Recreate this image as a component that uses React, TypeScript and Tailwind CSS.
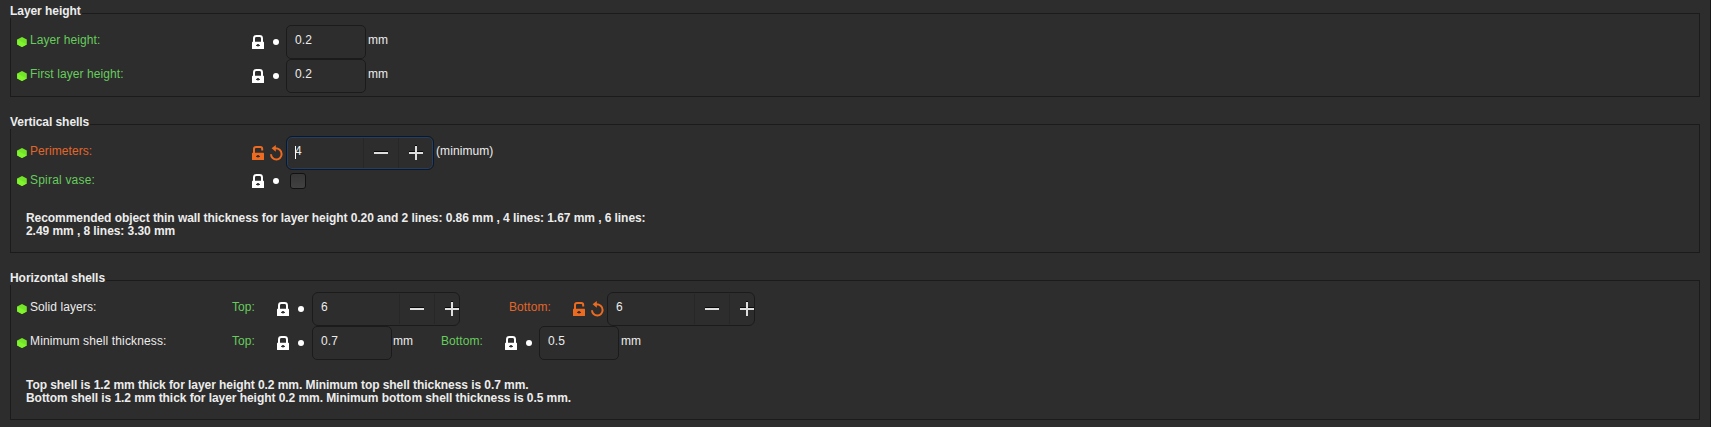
import type { ReactNode } from "react";

function Hexagon() {
  return (
    <svg width="10" height="10" viewBox="0 0 10 10" className="mr-[3px] shrink-0">
      <path d="M5 0 9.8 2.5v5L5 10 .2 7.5v-5Z" fill="#72e528" />
      <path d="M.2 2.5 9.8 7.5 5 10 .2 7.5Z" fill="#80f52d" />
    </svg>
  );
}

function Lock({ open = false }: { open?: boolean }) {
  return (
    <svg width="12" height="14" viewBox="0 0 12 14" className={open ? "shrink-0 text-[#ed6b21]" : "shrink-0 text-white"}>
      <path
        d={open ? "M2 7V3Q2 1 4 1h4.4Q10.2 1 10.2 3V4.6" : "M2 7V3.4Q2 1 4.4 1h3.2Q10 1 10 3.4V7"}
        fill="none"
        stroke="currentColor"
        strokeWidth="2"
      />
      <rect y="6.8" width="12" height="7.2" rx="0.5" fill="currentColor" />
      <path d="M4 10.4h4" stroke="#2d2d2d" strokeWidth="1" />
      <circle cx="6" cy="10.3" r="1.2" fill="#2d2d2d" />
    </svg>
  );
}

function Dot() {
  return <span className="mr-[7px] ml-[9px] size-[6px] shrink-0 rounded-full bg-white" />;
}

function Undo() {
  return (
    <svg width="13" height="16" viewBox="0 0 13 16" className="mr-[3px] ml-[6px] shrink-0">
      <path d="M4.6 3.3C8.8 3 11.6 5.5 11.6 9.1A5.3 5.3 0 0 1 1 9.3" fill="none" stroke="#ed6b21" strokeWidth="2" />
      <path d="M5.8 0V6.8L1.6 3.3Z" fill="#ed6b21" />
    </svg>
  );
}

function Text({ children, className = "" }: { children: ReactNode; className?: string }) {
  return <span className={`shrink-0 pb-[3px] leading-[15px] ${className}`}>{children}</span>;
}

function Input({ value }: { value: string }) {
  return (
    <div className="flex h-[34px] w-[80px] shrink-0 items-center rounded-[5px] border border-[#1b1b1b] pl-2">
      <Text>{value}</Text>
    </div>
  );
}

function Glyph({ plus = false }: { plus?: boolean }) {
  return (
    <svg width="14" height="16" viewBox="0 0 14 16" className="shrink-0" shapeRendering="crispEdges">
      <path d={plus ? "M0 6h14v1H0zM6 0h2v1H6z" : "M0 6h14v1H0z"} fill="#0a0a0a" />
      <path d={plus ? "M0 7h14v2H0zM6 1h2v14H6z" : "M0 7h14v2H0z"} fill="#dedede" />
    </svg>
  );
}

function Stepper({ value, focused = false }: { value: string; focused?: boolean }) {
  return (
    <div
      className={
        focused
          ? "flex h-[34px] w-[148px] shrink-0 overflow-hidden rounded-[6px] border border-[#11161f] ring-1 ring-[#1f3f6a] ring-inset"
          : "flex h-[34px] w-[148px] shrink-0 overflow-hidden rounded-[6px] border border-[#1b1b1b]"
      }
    >
      <div className={`flex shrink-0 items-center pl-2 ${focused ? "w-[76px]" : "w-[86px]"}`}>
        {focused && <span className="mt-[-2px] mr-[-1px] h-[13px] w-px bg-white" />}
        <Text>{value}</Text>
      </div>
      <div className="my-px flex w-[35px] shrink-0 items-center border-l border-[#272727] pl-[10px]">
        <Glyph />
      </div>
      <div className="my-px flex w-[35px] shrink-0 items-center border-l border-[#272727] pl-[10px]">
        <Glyph plus />
      </div>
    </div>
  );
}

function Row({ label, tone, className = "h-[34px]", children }: { label: string; tone: string; className?: string; children: ReactNode }) {
  return (
    <div className={`flex items-center pl-[6px] ${className}`}>
      <Hexagon />
      <Text className={tone}>{label}</Text>
      {children}
    </div>
  );
}

function Group({ title, className, children }: { title: string; className: string; children: ReactNode }) {
  return (
    <section className={`relative shrink-0 border border-[#1b1b1b] ${className}`}>
      <h2 className="absolute top-[-10px] left-[-1px] bg-[#2d2d2d] pr-px leading-[14px] font-bold tracking-[-0.06px]">{title}</h2>
      {children}
    </section>
  );
}

const green = "text-[#66cc5c]";
const orange = "text-[#e2662a]";

export default function App() {
  return (
    <main className="flex h-[427px] w-full flex-col overflow-hidden border-r border-[#171717] bg-[#2d2d2d] pt-[13px] pr-[10px] pl-[10px] font-['Liberation_Sans',Arial,sans-serif] text-[12px] tracking-[0.08px] whitespace-nowrap text-[#ececec]">
      <Group title="Layer height" className="h-[84px] pt-[11px]">
        <Row label="Layer height:" tone={`w-[222px] ${green}`}>
          <Lock />
          <Dot />
          <Input value="0.2" />
          <Text className="ml-[2px]">mm</Text>
        </Row>
        <Row label="First layer height:" tone={`w-[222px] ${green}`}>
          <Lock />
          <Dot />
          <Input value="0.2" />
          <Text className="ml-[2px]">mm</Text>
        </Row>
      </Group>

      <Group title="Vertical shells" className="mt-[27px] h-[129px] pt-[11px]">
        <Row label="Perimeters:" tone={`w-[222px] ${orange}`}>
          <Lock open />
          <Undo />
          <Stepper value="4" focused />
          <Text className="ml-[2px]">(minimum)</Text>
        </Row>
        <Row label="Spiral vase:" tone={`w-[222px] mt-[2px] tracking-[0.2px] ${green}`} className="h-[22px]">
          <Lock />
          <Dot />
          <span className="ml-1 size-4 rounded-[3px] border border-[#121212] bg-linear-to-b from-[#373737] to-[#414141]" />
        </Row>
        <p className="mt-[20px] pl-[15px] leading-[13px] font-bold tracking-[-0.06px]">
          Recommended object thin wall thickness for layer height 0.20 and 2 lines: 0.86 mm , 4 lines: 1.67 mm , 6 lines:
          <br />
          2.49 mm , 8 lines: 3.30 mm
        </p>
      </Group>

      <Group title="Horizontal shells" className="mt-[27px] h-[140px] pt-[11px]">
        <Row label="Solid layers:" tone="w-[202px]">
          <Text className={`w-[45px] ${green}`}>Top:</Text>
          <Lock />
          <Dot />
          <div className="ml-px shrink-0">
            <Stepper value="6" />
          </div>
          <Text className={`ml-[49px] w-[64px] ${orange}`}>Bottom:</Text>
          <Lock open />
          <Undo />
          <Stepper value="6" />
        </Row>
        <Row label="Minimum shell thickness:" tone="w-[202px] tracking-[0.13px]">
          <Text className={`w-[45px] ${green}`}>Top:</Text>
          <Lock />
          <Dot />
          <div className="ml-px shrink-0">
            <Input value="0.7" />
          </div>
          <Text className="ml-px w-[48px]">mm</Text>
          <Text className={`w-[64px] ${green}`}>Bottom:</Text>
          <Lock />
          <Dot />
          <Input value="0.5" />
          <Text className="ml-[2px]">mm</Text>
        </Row>
        <p className="mt-[19px] pl-[15px] leading-[13px] font-bold tracking-[-0.06px]">
          Top shell is 1.2 mm thick for layer height 0.2 mm. Minimum top shell thickness is 0.7 mm.
          <br />
          Bottom shell is 1.2 mm thick for layer height 0.2 mm. Minimum bottom shell thickness is 0.5 mm.
        </p>
      </Group>
    </main>
  );
}
